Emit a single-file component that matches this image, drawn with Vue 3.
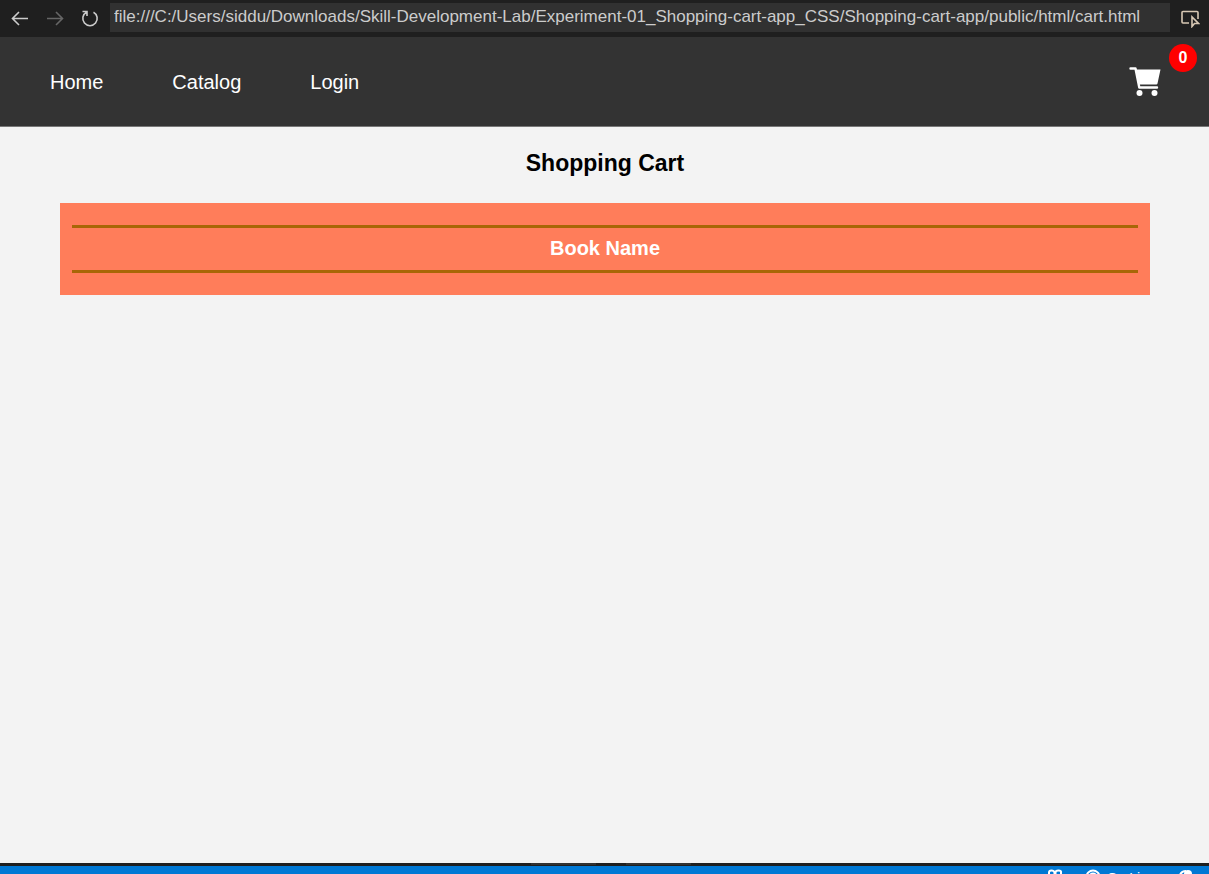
<script setup>
import { ref } from 'vue'

const address = ref('file:///C:/Users/siddu/Downloads/Skill-Development-Lab/Experiment-01_Shopping-cart-app_CSS/Shopping-cart-app/public/html/cart.html')
const links = ['Home', 'Catalog', 'Login']
const count = ref(0)
</script>

<template>
  <div class="window">
    <div class="toolbar">
      <button class="tool" type="button" aria-label="Back">
        <svg class="glyph" viewBox="0 0 18 18"><path d="M17 8.500H2M8 2L1.500 8.500L8 15" /></svg>
      </button>
      <button class="tool" type="button" aria-label="Forward" disabled>
        <svg class="glyph" viewBox="0 0 18 18"><path d="M1 8.500H16M10 2L16.500 8.500L10 15" /></svg>
      </button>
      <button class="tool" type="button" aria-label="Reload">
        <svg class="glyph" viewBox="0 0 18 18"><path d="M1.500 1.500H6V6M5.500 2.200A7.200 7.200 0 1 0 12.500 2.200" /></svg>
      </button>
      <input v-model="address" class="address" type="text" aria-label="Address" spellcheck="false" />
      <button class="tool inspect" type="button" aria-label="Select element">
        <svg class="glyph" viewBox="0 0 20 18">
          <path d="M9 13H3A1 1 0 0 1 2 12V2.500A1 1 0 0 1 3 1.500H17A1 1 0 0 1 18 2.500V9" />
          <path d="M12 7V16.500L14.500 13.500H18.500Z" />
        </svg>
      </button>
    </div>

    <header class="header">
      <nav class="nav">
        <a v-for="link in links" :key="link" href="#">{{ link }}</a>
      </nav>
      <a class="cart" href="#" aria-label="Cart">
        <svg class="cart-icon" viewBox="0 0 32 30">
          <path class="frame" d="M1.500 1.500H6.500L10.300 20.500H28" />
          <path d="M7 2.500H31.500L28.500 16.500Q28.300 17.500 27.300 17.500H10Z" />
          <circle cx="10.500" cy="26" r="3" />
          <circle cx="25.500" cy="26" r="3" />
        </svg>
        <span class="badge">{{ count }}</span>
      </a>
    </header>

    <main class="main">
      <h1 class="title">Shopping Cart</h1>
      <section class="panel">
        <hr />
        <h2>Book Name</h2>
        <hr />
      </section>
    </main>

    <div class="divider"><i></i><i></i></div>
    <footer class="status">
      <svg class="s-icon" viewBox="0 0 16 16"><path d="M2 7V3.500Q2 1.500 4.500 1.500T7.500 3.500V6H2.500M8.500 6V3.500Q8.500 1.500 11.500 1.500T14 3.500V7M1 8V13H15V8" /></svg>
      <svg class="s-icon live-icon" viewBox="0 0 16 16"><circle cx="8" cy="8" r="6.500" /><circle cx="8" cy="8" r="3.500" /></svg>
      <span>Go Live</span>
      <svg class="s-icon bell" viewBox="0 0 16 16"><path d="M2 12Q2 2 9 2" /><circle class="dot" cx="11" cy="5" r="4" /></svg>
    </footer>
  </div>
</template>

<style>
body {
  margin: 0;
}
</style>

<style scoped>
.window {
  display: flex;
  flex-direction: column;
  height: 100vh;
  overflow: hidden;
  background: #f3f3f3;
  font-family: "Liberation Sans", Arial, sans-serif;
}
.toolbar {
  display: flex;
  align-items: center;
  flex: none;
  height: 37px;
  padding: 0 0 0 2px;
  box-sizing: border-box;
  background: #1f1f1f;
}
.tool {
  display: flex;
  align-items: center;
  justify-content: center;
  flex: none;
  width: 35px;
  height: 36px;
  padding: 0;
  border: 0;
  background: none;
  color: #cccccc;
}
.tool:disabled {
  color: #666666;
}
.glyph {
  width: 18px;
  height: 18px;
  fill: none;
  stroke: currentColor;
  stroke-width: 1.6;
}
.inspect {
  width: 39px;
  color: #d8c8b4;
}
.inspect .glyph {
  width: 20px;
}
.address {
  flex: 1;
  min-width: 0;
  height: 29px;
  margin: 0 0 2px 3px;
  padding: 0 4px 2px;
  box-sizing: border-box;
  border: 0;
  outline: 0;
  background: #313131;
  color: #cccccc;
  font: 17px "Liberation Sans", Arial, sans-serif;
}
.header {
  display: flex;
  align-items: center;
  justify-content: space-between;
  flex: none;
  height: 90px;
  padding: 0 48px 0 50px;
  box-sizing: border-box;
  border-bottom: 1px solid #777777;
  background: #333333;
}
.nav {
  display: flex;
  gap: 69px;
}
.nav a {
  color: #ffffff;
  font-size: 20px;
  line-height: 24px;
  text-decoration: none;
}
.cart {
  position: relative;
  display: flex;
}
.cart-icon {
  width: 32px;
  height: 30px;
  fill: #ffffff;
}
.frame {
  fill: none;
  stroke: #ffffff;
  stroke-width: 2.4;
  stroke-linecap: round;
  stroke-linejoin: round;
}
.badge {
  position: absolute;
  top: -23px;
  right: -36px;
  width: 28px;
  border-radius: 14px;
  background: #ff0000;
  color: #ffffff;
  font-size: 16px;
  font-weight: bold;
  line-height: 28px;
  text-align: center;
}
.main {
  flex: 1;
  min-height: 0;
  padding: 22px 59px 0 60px;
}
.title {
  margin: 0 0 26px;
  color: #000000;
  font-size: 23px;
  line-height: 28px;
  text-align: center;
}
.panel {
  padding: 22px 12px;
  background: #ff7d5a;
}
.panel hr {
  height: 3px;
  margin: 0;
  border: 0;
  background: #a86606;
}
.panel h2 {
  margin: 0;
  padding: 8px 0 10px;
  color: #ffffff;
  font-size: 20px;
  line-height: 24px;
  text-align: center;
}
.divider {
  display: flex;
  flex: none;
  gap: 30px;
  justify-content: center;
  height: 3px;
  padding-left: 12px;
  background: #1f1f1f;
}
.divider i {
  width: 65px;
  height: 2px;
  background: #313131;
}
.status {
  display: flex;
  justify-content: flex-end;
  flex: none;
  height: 8px;
  padding: 3px 16px 0 0;
  box-sizing: border-box;
  overflow: hidden;
  background: #0078d4;
  color: #ffffff;
  font-size: 14px;
  line-height: 18px;
}
.s-icon {
  flex: none;
  width: 16px;
  height: 16px;
  fill: none;
  stroke: #ffffff;
  stroke-width: 2;
}
.live-icon {
  margin: 0 6px 0 22px;
}
.bell {
  margin-left: 22px;
}
.dot {
  fill: #ffffff;
  stroke: none;
}
</style>
